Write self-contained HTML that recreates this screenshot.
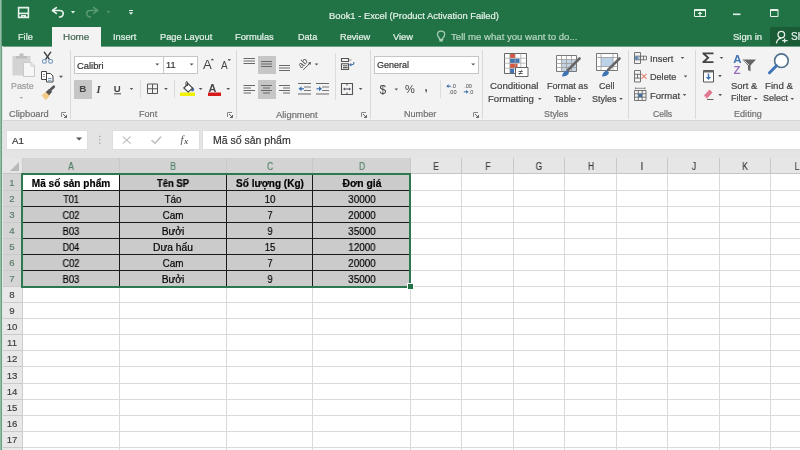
<!DOCTYPE html>
<html><head><meta charset="utf-8">
<style>
*{margin:0;padding:0;box-sizing:border-box}
html,body{width:800px;height:450px;overflow:hidden;background:#fff}
body{position:relative;font-family:"Liberation Sans",sans-serif}
.a{position:absolute}
.t{-webkit-text-stroke:0.2px currentColor;will-change:transform;position:absolute;white-space:nowrap;line-height:1;font-family:"Liberation Sans",sans-serif}
svg{position:absolute;overflow:visible;will-change:transform}
</style></head><body>

<div class="a" style="left:0px;top:0px;width:800px;height:46px;background:#217346;"></div>
<div class="t" style="left:329.00px;top:10.74px;font-size:9.4px;color:#e6f1ea;font-weight:normal;">Book1 - Excel (Product Activation Failed)</div>
<div class="a" style="left:52px;top:27px;width:49px;height:20px;background:#f3f3f3;"></div>
<div class="a" style="left:770px;top:27px;width:30px;height:19px;background:#195c36;"></div>
<div class="t" style="left:18.00px;top:33.21px;font-size:9.2px;color:#e6f1ea;font-weight:normal;">File</div>
<div class="t" style="left:62.80px;top:31.92px;font-size:9.9px;color:#40654f;font-weight:normal;">Home</div>
<div class="t" style="left:112.50px;top:33.13px;font-size:9.3px;color:#e6f1ea;font-weight:normal;">Insert</div>
<div class="t" style="left:160.00px;top:33.13px;font-size:9.3px;color:#e6f1ea;font-weight:normal;">Page Layout</div>
<div class="t" style="left:235.00px;top:33.13px;font-size:9.3px;color:#e6f1ea;font-weight:normal;">Formulas</div>
<div class="t" style="left:297.50px;top:33.30px;font-size:9.1px;color:#e6f1ea;font-weight:normal;">Data</div>
<div class="t" style="left:340.00px;top:33.21px;font-size:9.2px;color:#e6f1ea;font-weight:normal;">Review</div>
<div class="t" style="left:393.00px;top:33.13px;font-size:9.3px;color:#e6f1ea;font-weight:normal;">View</div>
<div class="t" style="left:451.00px;top:32.37px;font-size:9.6px;color:#b8d6c3;font-weight:normal;">Tell me what you want to do...</div>
<div class="t" style="left:733.00px;top:31.96px;font-size:9.5px;color:#e6f1ea;font-weight:normal;">Sign in</div>
<div class="t" style="left:791.30px;top:31.74px;font-size:10px;color:#e6f1ea;font-weight:normal;">Sh</div>
<div class="a" style="left:2px;top:46px;width:798px;height:75px;background:#f3f3f3;"></div>
<div class="a" style="left:2px;top:120px;width:798px;height:1px;background:#d6d6d6;"></div>
<div class="a" style="left:2px;top:46px;width:50px;height:1px;background:#6fa386;"></div>
<div class="a" style="left:101px;top:46px;width:699px;height:1px;background:#6fa386;"></div>
<div class="a" style="left:70px;top:50px;width:1px;height:69px;background:#d9d9d9;"></div>
<div class="a" style="left:236px;top:50px;width:1px;height:69px;background:#d9d9d9;"></div>
<div class="a" style="left:370px;top:50px;width:1px;height:69px;background:#d9d9d9;"></div>
<div class="a" style="left:482px;top:50px;width:1px;height:69px;background:#d9d9d9;"></div>
<div class="a" style="left:628px;top:50px;width:1px;height:69px;background:#d9d9d9;"></div>
<div class="a" style="left:695px;top:50px;width:1px;height:69px;background:#d9d9d9;"></div>
<div class="a" style="left:140px;top:80px;width:1px;height:18px;background:#dcdcdc;"></div>
<div class="a" style="left:174px;top:80px;width:1px;height:18px;background:#dcdcdc;"></div>
<div class="a" style="left:335px;top:53px;width:1px;height:47px;background:#dcdcdc;"></div>
<div class="a" style="left:440px;top:80px;width:1px;height:18px;background:#dcdcdc;"></div>
<div class="a" style="left:74px;top:55.5px;width:90px;height:18px;background:#fff;border:1px solid #c6c6c6"></div>
<div class="a" style="left:163px;top:55.5px;width:35px;height:18px;background:#fff;border:1px solid #c6c6c6"></div>
<div class="a" style="left:374px;top:55.5px;width:105px;height:18px;background:#fff;border:1px solid #c6c6c6"></div>
<div class="a" style="left:74px;top:80px;width:18px;height:19px;background:#c6c6c6;"></div>
<div class="a" style="left:258px;top:55.5px;width:18px;height:18px;background:#c6c6c6;"></div>
<div class="a" style="left:258px;top:80px;width:18px;height:19px;background:#c6c6c6;"></div>
<div class="t" style="left:9.00px;top:109.63px;font-size:9.3px;color:#707070;font-weight:normal;">Clipboard</div>
<div class="t" style="left:138.50px;top:109.80px;font-size:9.1px;color:#707070;font-weight:normal;">Font</div>
<div class="t" style="left:276.00px;top:109.54px;font-size:9.4px;color:#707070;font-weight:normal;">Alignment</div>
<div class="t" style="left:403.60px;top:109.80px;font-size:9.1px;color:#707070;font-weight:normal;">Number</div>
<div class="t" style="left:543.60px;top:109.97px;font-size:8.9px;color:#707070;font-weight:normal;">Styles</div>
<div class="t" style="left:652.50px;top:110.22px;font-size:8.6px;color:#707070;font-weight:normal;">Cells</div>
<div class="t" style="left:734.00px;top:109.80px;font-size:9.1px;color:#707070;font-weight:normal;">Editing</div>
<div class="t" style="left:11.00px;top:81.97px;font-size:8.9px;color:#9b9b9b;font-weight:normal;">Paste</div>
<div class="t" style="left:76.50px;top:60.84px;font-size:9.4px;color:#333;font-weight:normal;">Calibri</div>
<div class="t" style="left:166.00px;top:61.01px;font-size:9.2px;color:#333;font-weight:normal;">11</div>
<div class="t" style="left:377.00px;top:61.18px;font-size:9.0px;color:#333;font-weight:normal;">General</div>
<div class="t" style="left:490.40px;top:81.29px;font-size:9.7px;color:#444;font-weight:normal;">Conditional</div>
<div class="t" style="left:488.40px;top:94.37px;font-size:9.6px;color:#444;font-weight:normal;">Formatting</div>
<div class="t" style="left:546.50px;top:81.80px;font-size:9.1px;color:#444;font-weight:normal;">Format as</div>
<div class="t" style="left:553.60px;top:94.71px;font-size:9.2px;color:#444;font-weight:normal;">Table</div>
<div class="t" style="left:599.00px;top:81.88px;font-size:9.0px;color:#444;font-weight:normal;">Cell</div>
<div class="t" style="left:591.60px;top:94.88px;font-size:9.0px;color:#444;font-weight:normal;">Styles</div>
<div class="t" style="left:649.50px;top:54.63px;font-size:9.3px;color:#444;font-weight:normal;">Insert</div>
<div class="t" style="left:649.50px;top:72.80px;font-size:9.1px;color:#444;font-weight:normal;">Delete</div>
<div class="t" style="left:649.50px;top:90.96px;font-size:9.5px;color:#444;font-weight:normal;">Format</div>
<div class="t" style="left:731.00px;top:81.26px;font-size:9.5px;color:#444;font-weight:normal;">Sort &amp;</div>
<div class="t" style="left:731.00px;top:94.30px;font-size:9.1px;color:#444;font-weight:normal;">Filter</div>
<div class="t" style="left:764.50px;top:81.09px;font-size:9.7px;color:#444;font-weight:normal;">Find &amp;</div>
<div class="t" style="left:763.20px;top:94.38px;font-size:9.0px;color:#444;font-weight:normal;">Select</div>
<svg style="left:0;top:0" width="800" height="450" viewBox="0 0 800 450"><g fill="none" stroke="#e6f1ea" stroke-width="1.6"><path d="M18.6 7.6H28.4V17.4H18.6Z"/><path d="M19 13.4H28"/></g><path d="M21 15H26V17.5H24V16.2H22.6V17.5H21Z" fill="#e6f1ea"/><g fill="none" stroke="#e6f1ea" stroke-width="1.7" stroke-linecap="round" stroke-linejoin="round"><path d="M56.3 7.6L52.5 10.5L56.3 13.4"/><path d="M52.8 10.5H59.5C62 10.5 63.2 12 63.2 13.7C63.2 15.5 61.6 17 59.5 17"/></g><path d="M70.9 11.0 L75.1 11.0 L73 13.399999999999999 Z" fill="#e6f1ea"/><g fill="none" stroke="#5a9a74" stroke-width="1.5" stroke-linecap="round" stroke-linejoin="round"><path d="M93.5 7.4L97.7 10.4L93.5 13.5"/><path d="M97.5 10.4H90.5C88 10.4 86.7 12 86.7 13.6C86.7 15.4 88.4 17 90.5 17"/></g><path d="M106.7 11.1 L110.3 11.1 L108.5 13.299999999999999 Z" fill="#5a9a74"/><path d="M129 10.5H133" stroke="#e6f1ea" stroke-width="1"/><path d="M128.8 12.2 L133.2 12.2 L131 14.8 Z" fill="#e6f1ea"/><g fill="none" stroke="#e6f1ea" stroke-width="1"><path d="M694.5 9.5H705.5V16.5H694.5Z"/></g><path d="M694.5 9.5H705.5V11H694.5Z" fill="#e6f1ea"/><path d="M697.5 14L700 11.5L702.5 14Z" fill="#e6f1ea"/><path d="M700 13V16" stroke="#e6f1ea" stroke-width="1.2"/><path d="M733 14.3H740.5" stroke="#e6f1ea" stroke-width="1.6"/><path d="M770.5 9.5H778V16.5H770.5Z" fill="none" stroke="#e6f1ea" stroke-width="1"/><path d="M770.5 9.5H778V11H770.5Z" fill="#e6f1ea"/><g fill="none" stroke="#a9cfb7" stroke-width="1.2"><path d="M439.5 38.2C438.2 36.9 437.5 35.8 437.5 34.4C437.5 32.4 439.1 31.2 441.1 31.2C443.1 31.2 444.7 32.4 444.7 34.4C444.7 35.8 444 36.9 442.7 38.2V39.3H439.5Z"/></g><path d="M439.4 39.8H442.8V41.6H439.4Z" fill="#a9cfb7"/><g fill="none" stroke="#e6f1ea" stroke-width="1.3"><circle cx="781.3" cy="34.6" r="3.3"/><path d="M776.4 43.4C776.8 40.4 778.6 38.3 781.3 38.3"/><path d="M784.6 38.6V42.8M782.2 40.6H787.6"/></g><path d="M12.5 56H30.5V75.5H12.5Z" fill="#d3d3d3"/><path d="M16 58.5V56H19.5V53.5H23.5V56H27V58.5Z" fill="#bdbdbd"/><path d="M23.5 62.5H31L34.5 66V76.5H23.5Z" fill="#f7f7f7" stroke="#c9c9c9" stroke-width="1"/><path d="M31 62.5V66H34.5" fill="none" stroke="#c9c9c9" stroke-width="1"/><path d="M19.5 97.0 L22.9 97.0 L21.2 99.0 Z" fill="#a8a8a8"/><g stroke="#3b3b3b" stroke-width="1.4" fill="none" stroke-linecap="round"><path d="M44.3 52.2L49.2 59.2"/><path d="M50.7 52.2L45.8 59.2"/></g><g stroke="#6b8fb8" stroke-width="1.1" fill="#fff"><circle cx="44.4" cy="61.4" r="1.9"/><circle cx="50.6" cy="61.4" r="1.9"/></g><g stroke="#444" stroke-width="1" fill="#fff"><path d="M41.5 71.5H46.5V79.5H41.5Z"/><path d="M46.5 73.5H50.5L53 76V82H46.5Z"/></g><path d="M48 78.5H51.5M48 80.3H51.5" stroke="#5b84b1" stroke-width="0.8"/><path d="M43 74.5H45M43 76.5H45" stroke="#888" stroke-width="0.8"/><path d="M59.0 75.7 L63.0 75.7 L61 77.89999999999999 Z" fill="#555"/><path d="M41.5 95.5L46.5 91.2L50.2 95L46 100.2Z" fill="#f3cc8c"/><path d="M46.2 91.5L51.5 86.8L54.3 89.8L49.8 95Z" fill="none"/><path d="M45.8 92L49.3 88.8L52.2 91.8L49 95.2Z" fill="#555"/><path d="M50.8 89.5L53.8 86.7" stroke="#555" stroke-width="2.6" stroke-linecap="round"/><path d="M61.5 117V112.5H66" fill="none" stroke="#888" stroke-width="1"/><path d="M63 114L66.5 117.5M66.5 115V117.5H64" fill="none" stroke="#666" stroke-width="1"/><path d="M155.3 63.4 L159.3 63.4 L157.3 65.6 Z" fill="#555"/><path d="M189.6 63.4 L193.6 63.4 L191.6 65.6 Z" fill="#555"/><path d="M471.2 63.4 L475.2 63.4 L473.2 65.6 Z" fill="#555"/><text x="203" y="69.3" font-family="Liberation Sans" font-size="13.2" fill="#444">A</text><path d="M210.5 60.2L212.3 58.5L214.1 60.2Z" fill="#444"/><text x="221" y="69.3" font-family="Liberation Sans" font-size="10" fill="#444">A</text><path d="M227.5 59.3L229.3 61L231.1 59.3Z" fill="#444"/><text x="79.3" y="92.4" font-family="Liberation Sans" font-weight="bold" font-size="9.8" fill="#444">B</text><text x="96.5" y="92.5" font-family="Liberation Serif" font-style="italic" font-weight="bold" font-size="10.5" fill="#444">I</text><text x="113.8" y="91.8" font-family="Liberation Sans" font-weight="bold" font-size="9.6" fill="#444">U</text><path d="M114 93.8H121" stroke="#444" stroke-width="1"/><path d="M129.7 87.9 L133.3 87.9 L131.5 90.1 Z" fill="#555"/><g fill="none" stroke="#555" stroke-width="1"><path d="M147.5 84H157.5V93.5H147.5Z"/><path d="M152.5 84V93.5M147.5 88.75H157.5"/></g><path d="M164.1 87.9 L167.9 87.9 L166 90.1 Z" fill="#555"/><path d="M180 92.5H195V96H180Z" fill="#f2f200"/><path d="M191 86.5C193 86.8 194.3 88.2 194.2 90C193.8 91.3 192.5 91.5 191.3 91Z" fill="#4d6ea3"/><path d="M183.8 88L188.3 83.8L192.6 88.2L188.2 92Z" fill="#fff" stroke="#444" stroke-width="1.1"/><path d="M186 85.8V82.2C186 81.4 187.5 81.4 187.5 82.2V86" fill="none" stroke="#444" stroke-width="1"/><path d="M198.7 87.9 L202.5 87.9 L200.6 90.1 Z" fill="#555"/><path d="M208 92.5H221V96H208Z" fill="#d61a1a"/><text x="208.6" y="91.6" font-family="Liberation Sans" font-weight="bold" font-size="10.8" fill="#454545">A</text><path d="M226.29999999999998 87.9 L230.1 87.9 L228.2 90.1 Z" fill="#555"/><path d="M227.5 117V112.5H232" fill="none" stroke="#888" stroke-width="1"/><path d="M229 114L232.5 117.5M232.5 115V117.5H230" fill="none" stroke="#666" stroke-width="1"/><path d="M243.5 58.5H255" stroke="#686868" stroke-width="1"/><path d="M243.5 61H255" stroke="#686868" stroke-width="1"/><path d="M243.5 63.5H255" stroke="#686868" stroke-width="1"/><path d="M261 61.5H272" stroke="#686868" stroke-width="1"/><path d="M261 64H272" stroke="#686868" stroke-width="1"/><path d="M261 66.5H272" stroke="#686868" stroke-width="1"/><path d="M279 65.5H290" stroke="#686868" stroke-width="1"/><path d="M279 68H290" stroke="#686868" stroke-width="1"/><path d="M279 70.5H290" stroke="#686868" stroke-width="1"/><path d="M243.5 85.5H255" stroke="#686868" stroke-width="1"/><path d="M243.5 88H251" stroke="#686868" stroke-width="1"/><path d="M243.5 90.5H255" stroke="#686868" stroke-width="1"/><path d="M243.5 93H251" stroke="#686868" stroke-width="1"/><path d="M261 85.5H272" stroke="#686868" stroke-width="1"/><path d="M263 88H270" stroke="#686868" stroke-width="1"/><path d="M261 90.5H272" stroke="#686868" stroke-width="1"/><path d="M263 93H270" stroke="#686868" stroke-width="1"/><path d="M279 85.5H290" stroke="#686868" stroke-width="1"/><path d="M283 88H290" stroke="#686868" stroke-width="1"/><path d="M279 90.5H290" stroke="#686868" stroke-width="1"/><path d="M283 93H290" stroke="#686868" stroke-width="1"/><text x="297.6" y="66.3" transform="rotate(-45 302.3 63)" font-family="Liberation Sans" font-size="9" fill="#4a4a4a">ab</text><path d="M303.3 69.8L309.5 63.6" stroke="#555" stroke-width="1"/><path d="M311 62L310.3 65L308 62.7Z" fill="#444"/><path d="M314.7 63.4 L318.3 63.4 L316.5 65.6 Z" fill="#555"/><path d="M298 83.5H311" stroke="#686868" stroke-width="1"/><path d="M298 94H311" stroke="#686868" stroke-width="1"/><path d="M304 87H311" stroke="#777" stroke-width="1"/><path d="M304 90.5H311" stroke="#777" stroke-width="1"/><path d="M298.5 88.8L301.5 86.3V91.3Z" fill="#3d6fae"/><path d="M300.5 88.8H304" stroke="#3d6fae" stroke-width="1.2"/><path d="M316 83.5H329" stroke="#686868" stroke-width="1"/><path d="M316 94H329" stroke="#686868" stroke-width="1"/><path d="M322 87H329" stroke="#777" stroke-width="1"/><path d="M322 90.5H329" stroke="#777" stroke-width="1"/><path d="M322 88.8L319 86.3V91.3Z" fill="#3d6fae"/><path d="M316.5 88.8H320" stroke="#3d6fae" stroke-width="1.2"/><g fill="none" stroke="#555" stroke-width="1.1"><path d="M341.5 58.5H348.5V61.5H341.5Z"/><path d="M341.5 63.8H348.5V69.5H341.5Z"/><path d="M343 65.8H347.5M343 67.6H347.5"/></g><path d="M349 60H351.5" stroke="#888" stroke-width="1"/><path d="M353.8 62V63.2C353.8 64.2 353 64.8 351.8 64.8H350.5" fill="none" stroke="#3d6fae" stroke-width="1.1"/><path d="M349 64.8L351.3 63V66.6Z" fill="#3d6fae"/><g fill="none" stroke="#555" stroke-width="1.1"><path d="M341.5 83.5H352.5V94.5H341.5Z"/><path d="M347 83.5V85.5M347 92.5V94.5"/></g><path d="M344.5 89H349.5" stroke="#667" stroke-width="1.2"/><path d="M343 89L345 87.5V90.5Z" fill="#556"/><path d="M351 89L349 87.5V90.5Z" fill="#556"/><path d="M358.8 87.9 L362.40000000000003 87.9 L360.6 90.1 Z" fill="#555"/><path d="M361.5 117V112.5H366" fill="none" stroke="#888" stroke-width="1"/><path d="M363 114L366.5 117.5M366.5 115V117.5H364" fill="none" stroke="#666" stroke-width="1"/><text x="379.5" y="93.5" font-family="Liberation Sans" font-size="12" fill="#444">$</text><path d="M394.5 88.4 L398.1 88.4 L396.3 90.6 Z" fill="#555"/><text x="405" y="93.3" font-family="Liberation Sans" font-size="11" fill="#444">%</text><text x="424.5" y="91" font-family="Liberation Sans" font-weight="bold" font-size="11" fill="#444">,</text><g font-family="Liberation Sans" font-size="5.6" fill="#444"><text x="451.2" y="88.4">.0</text><text x="448.8" y="94.4">.00</text><text x="464.2" y="88.4">.00</text><text x="468.6" y="94.4">.0</text></g><path d="M446.2 86.2L448.6 84.3V88.1Z" fill="#3d6fae"/><path d="M448 86.2H451" stroke="#3d6fae" stroke-width="1"/><path d="M468.6 91.8L466.2 89.9V93.7Z" fill="#3d6fae"/><path d="M463.8 91.8H467" stroke="#3d6fae" stroke-width="1"/><path d="M473.5 117V112.5H478" fill="none" stroke="#888" stroke-width="1"/><path d="M475 114L478.5 117.5M478.5 115V117.5H476" fill="none" stroke="#666" stroke-width="1"/><path d="M504.5 53.5H526.5V73.5H504.5Z" fill="#fff" stroke="#666" stroke-width="1"/><path d="M510 54H515V58H510Z" fill="#d8553e"/><path d="M510 58.5H519.5V63H510Z" fill="#3f74b5"/><path d="M510 63.5H517.5V68H510Z" fill="#d8553e"/><path d="M510 68.5H514V73H510Z" fill="#3f74b5"/><g stroke="#aaa" stroke-width="0.8"><path d="M504.5 58.2H526.5M504.5 63.2H526.5M504.5 68.2H526.5M509.8 53.5V73.5M515.2 53.5V73.5M520.8 53.5V73.5"/></g><path d="M515.5 67.5H528V76.5H515.5Z" fill="#fff" stroke="#666" stroke-width="1"/><text x="518.6" y="75.2" font-family="Liberation Sans" font-size="8.5" fill="#333">≠</text><path d="M538.0 97.9 L541.5999999999999 97.9 L539.8 100.1 Z" fill="#555"/><path d="M556.5 55.5H576.5V71.5H556.5Z" fill="#fff" stroke="#777" stroke-width="1"/><path d="M561.5 59.5H576V71H561.5Z" fill="#c3d3e2"/><g stroke="#999" stroke-width="0.8"><path d="M556.5 59.5H576.5M556.5 63.5H576.5M556.5 67.5H576.5M561.5 55.5V71.5M566.5 55.5V71.5M571.5 55.5V71.5"/></g><path d="M568 70L579.5 58.5" stroke="#666" stroke-width="2.6" stroke-linecap="round"/><path d="M562 76.5C562.5 73 564 71 567 70.5L569 72.5C568.5 75 566 76.5 562 76.5Z" fill="#3f74b5"/><path d="M577.7 97.9 L581.3 97.9 L579.5 100.1 Z" fill="#555"/><path d="M596.5 53.5H617.5V70.5H596.5Z" fill="#fff" stroke="#777" stroke-width="1"/><path d="M601 57.5H613V66.5H601Z" fill="#bcd2e8"/><g stroke="#999" stroke-width="0.8"><path d="M596.5 57.5H617.5M596.5 66.5H617.5M601 53.5V70.5M613 53.5V70.5"/></g><path d="M608 70L619.5 58.5" stroke="#666" stroke-width="2.6" stroke-linecap="round"/><path d="M602 76.5C602.5 73 604 71 607 70.5L609 72.5C608.5 75 606 76.5 602 76.5Z" fill="#3f74b5"/><path d="M619.2 97.9 L622.8 97.9 L621 100.1 Z" fill="#555"/><g fill="none" stroke="#666" stroke-width="0.9"><path d="M634.5 52.5H640.5V63.5H634.5Z"/><path d="M634.5 56.2H640.5M634.5 59.8H640.5"/><path d="M640.5 56.2H646.5V59.8H640.5Z"/><path d="M643.5 56.2V59.8"/></g><path d="M634.3 58L637.3 55.8V60.2Z" fill="#4f7fb8"/><path d="M636 58H639.5" stroke="#4f7fb8" stroke-width="1.2"/><path d="M680.7 56.9 L684.3 56.9 L682.5 59.1 Z" fill="#555"/><g fill="none" stroke="#666" stroke-width="0.9"><path d="M634.5 70.5H640.5V82H634.5Z"/><path d="M634.5 74.3H640.5M634.5 78.1H640.5M637.5 74.3V78.1"/></g><path d="M641.5 73.8L646.5 78.8M646.5 73.8L641.5 78.8" stroke="#e57f72" stroke-width="1.1"/><path d="M683.7 75.4 L687.3 75.4 L685.5 77.6 Z" fill="#555"/><g fill="none" stroke="#666" stroke-width="0.9"><path d="M634.5 90.5H646V100.5H634.5Z"/><path d="M634.5 93.8H646M634.5 97.2H646M638.3 90.5V100.5M642.2 90.5V100.5"/></g><path d="M635.5 88.3H645M635.5 87.3V89.3M645 87.3V89.3" stroke="#777" stroke-width="0.8"/><path d="M638.5 94H642V97H638.5Z" fill="#3f6fa8"/><path d="M682.7 93.9 L686.3 93.9 L684.5 96.1 Z" fill="#555"/><path d="M702.5 52.5H713.5V54.3H705.8L709.5 57.7L705.8 61.2H713.5V63H702.5V61.5L706.8 57.7L702.5 54Z" fill="#444"/><path d="M719.7 56.9 L723.3 56.9 L721.5 59.1 Z" fill="#555"/><path d="M703.5 70.5H713.5V82H703.5Z" fill="#fff" stroke="#555" stroke-width="1"/><path d="M703.5 70.5H713.5V72.5H703.5Z" fill="#666"/><path d="M708.5 73.5V79" stroke="#3f74b5" stroke-width="1.5"/><path d="M705.8 77L708.5 80L711.2 77Z" fill="#3f74b5"/><path d="M718.2 75.10000000000001 L721.8 75.10000000000001 L720 77.3 Z" fill="#555"/><path d="M704 95.5L709.5 89.5L712.5 92.5L707 98.5Z" fill="#e0778f"/><path d="M704 95.5L707 98.5" stroke="#f0b0c0" stroke-width="1"/><path d="M707 99.5H713.5" stroke="#555" stroke-width="0.9"/><path d="M718.4000000000001 94.10000000000001 L722.0 94.10000000000001 L720.2 96.3 Z" fill="#555"/><text x="733.2" y="63.3" font-family="Liberation Sans" font-size="11.5" font-weight="bold" fill="#3f74b5">A</text><text x="733.4" y="74" font-family="Liberation Sans" font-size="11.5" font-weight="bold" fill="#9a6fc0">Z</text><path d="M742.5 59.5H756L750.5 65.5V71.5L748 70V65.5Z" fill="#666"/><path d="M744.5 60.5L749 65" stroke="#e8e8e8" stroke-width="0.8"/><path d="M754.0 97.9 L757.5999999999999 97.9 L755.8 100.1 Z" fill="#555"/><circle cx="781.4" cy="60.7" r="6.8" fill="#fff" stroke="#4f6f8c" stroke-width="1.6"/><path d="M776.5 65.8L769.5 72.8" stroke="#3f74b5" stroke-width="3" stroke-linecap="round"/><path d="M790.5 97.9 L794.0999999999999 97.9 L792.3 100.1 Z" fill="#555"/></svg>
<div class="a" style="left:2px;top:121px;width:798px;height:38px;background:#e4e4e4;"></div>
<div class="a" style="left:6px;top:129.5px;width:82px;height:20.5px;background:#fff;border:1px solid #dedede"></div>
<div class="t" style="left:11.50px;top:135.99px;font-size:9.7px;color:#333;font-weight:normal;">A1</div>
<div class="a" style="left:111.5px;top:129.5px;width:88px;height:20.5px;background:#fff;border:1px solid #dedede"></div>
<div class="a" style="left:202px;top:129.5px;width:600px;height:20.5px;background:#fff;border:1px solid #dedede"></div>
<div class="t" style="left:213.00px;top:135.11px;font-size:10.5px;color:#333;font-weight:normal;">Mã số sản phẩm</div>
<svg style="left:0;top:0" width="800" height="450" viewBox="0 0 800 450"><path d="M76 137.6H82.2L79.1 140.6Z" fill="#555"/><g fill="#9a9a9a"><rect x="99.2" y="135.8" width="1.2" height="1.2"/><rect x="99.2" y="139.2" width="1.2" height="1.2"/><rect x="99.2" y="142.6" width="1.2" height="1.2"/></g><path d="M122.8 136.6L130.6 143.6M130.6 136.6L122.8 143.6" stroke="#bdbdbd" stroke-width="1.1"/><path d="M151.5 140.2L155 143.4L161 136.6" fill="none" stroke="#c4c4c4" stroke-width="1.6"/><text x="180.5" y="143" font-family="Liberation Serif" font-style="italic" font-size="11" fill="#555">f</text><text x="184.3" y="144" font-family="Liberation Serif" font-style="italic" font-weight="bold" font-size="8" fill="#555">x</text></svg>
<div class="a" style="left:2px;top:158px;width:798px;height:16px;background:#e6e6e6;"></div>
<div class="a" style="left:22px;top:158px;width:389px;height:15px;background:#d3d3d3;"></div>
<div class="a" style="left:2px;top:174px;width:21px;height:276px;background:#e8e8e8;"></div>
<div class="a" style="left:2px;top:174px;width:21px;height:113px;background:#d5d5d5;"></div>
<div class="a" style="left:119px;top:174px;width:1px;height:276px;background:#dadada;"></div>
<div class="a" style="left:119px;top:158px;width:1px;height:15px;background:#c8c8c8;"></div>
<div class="a" style="left:226px;top:174px;width:1px;height:276px;background:#dadada;"></div>
<div class="a" style="left:226px;top:158px;width:1px;height:15px;background:#c8c8c8;"></div>
<div class="a" style="left:312px;top:174px;width:1px;height:276px;background:#dadada;"></div>
<div class="a" style="left:312px;top:158px;width:1px;height:15px;background:#c8c8c8;"></div>
<div class="a" style="left:410px;top:174px;width:1px;height:276px;background:#dadada;"></div>
<div class="a" style="left:410px;top:158px;width:1px;height:15px;background:#c8c8c8;"></div>
<div class="a" style="left:461px;top:174px;width:1px;height:276px;background:#dadada;"></div>
<div class="a" style="left:461px;top:158px;width:1px;height:15px;background:#c8c8c8;"></div>
<div class="a" style="left:513px;top:174px;width:1px;height:276px;background:#dadada;"></div>
<div class="a" style="left:513px;top:158px;width:1px;height:15px;background:#c8c8c8;"></div>
<div class="a" style="left:564px;top:174px;width:1px;height:276px;background:#dadada;"></div>
<div class="a" style="left:564px;top:158px;width:1px;height:15px;background:#c8c8c8;"></div>
<div class="a" style="left:616px;top:174px;width:1px;height:276px;background:#dadada;"></div>
<div class="a" style="left:616px;top:158px;width:1px;height:15px;background:#c8c8c8;"></div>
<div class="a" style="left:667px;top:174px;width:1px;height:276px;background:#dadada;"></div>
<div class="a" style="left:667px;top:158px;width:1px;height:15px;background:#c8c8c8;"></div>
<div class="a" style="left:719px;top:174px;width:1px;height:276px;background:#dadada;"></div>
<div class="a" style="left:719px;top:158px;width:1px;height:15px;background:#c8c8c8;"></div>
<div class="a" style="left:770px;top:174px;width:1px;height:276px;background:#dadada;"></div>
<div class="a" style="left:770px;top:158px;width:1px;height:15px;background:#c8c8c8;"></div>
<div class="a" style="left:22px;top:190px;width:778px;height:1px;background:#dadada;"></div>
<div class="a" style="left:2px;top:190px;width:21px;height:1px;background:#cacaca;"></div>
<div class="a" style="left:22px;top:206px;width:778px;height:1px;background:#dadada;"></div>
<div class="a" style="left:2px;top:206px;width:21px;height:1px;background:#cacaca;"></div>
<div class="a" style="left:22px;top:222px;width:778px;height:1px;background:#dadada;"></div>
<div class="a" style="left:2px;top:222px;width:21px;height:1px;background:#cacaca;"></div>
<div class="a" style="left:22px;top:238px;width:778px;height:1px;background:#dadada;"></div>
<div class="a" style="left:2px;top:238px;width:21px;height:1px;background:#cacaca;"></div>
<div class="a" style="left:22px;top:254px;width:778px;height:1px;background:#dadada;"></div>
<div class="a" style="left:2px;top:254px;width:21px;height:1px;background:#cacaca;"></div>
<div class="a" style="left:22px;top:270px;width:778px;height:1px;background:#dadada;"></div>
<div class="a" style="left:2px;top:270px;width:21px;height:1px;background:#cacaca;"></div>
<div class="a" style="left:22px;top:286px;width:778px;height:1px;background:#dadada;"></div>
<div class="a" style="left:2px;top:286px;width:21px;height:1px;background:#cacaca;"></div>
<div class="a" style="left:22px;top:302px;width:778px;height:1px;background:#dadada;"></div>
<div class="a" style="left:2px;top:302px;width:21px;height:1px;background:#cacaca;"></div>
<div class="a" style="left:22px;top:318px;width:778px;height:1px;background:#dadada;"></div>
<div class="a" style="left:2px;top:318px;width:21px;height:1px;background:#cacaca;"></div>
<div class="a" style="left:22px;top:334px;width:778px;height:1px;background:#dadada;"></div>
<div class="a" style="left:2px;top:334px;width:21px;height:1px;background:#cacaca;"></div>
<div class="a" style="left:22px;top:350px;width:778px;height:1px;background:#dadada;"></div>
<div class="a" style="left:2px;top:350px;width:21px;height:1px;background:#cacaca;"></div>
<div class="a" style="left:22px;top:366px;width:778px;height:1px;background:#dadada;"></div>
<div class="a" style="left:2px;top:366px;width:21px;height:1px;background:#cacaca;"></div>
<div class="a" style="left:22px;top:383px;width:778px;height:1px;background:#dadada;"></div>
<div class="a" style="left:2px;top:383px;width:21px;height:1px;background:#cacaca;"></div>
<div class="a" style="left:22px;top:399px;width:778px;height:1px;background:#dadada;"></div>
<div class="a" style="left:2px;top:399px;width:21px;height:1px;background:#cacaca;"></div>
<div class="a" style="left:22px;top:415px;width:778px;height:1px;background:#dadada;"></div>
<div class="a" style="left:2px;top:415px;width:21px;height:1px;background:#cacaca;"></div>
<div class="a" style="left:22px;top:431px;width:778px;height:1px;background:#dadada;"></div>
<div class="a" style="left:2px;top:431px;width:21px;height:1px;background:#cacaca;"></div>
<div class="a" style="left:22px;top:447px;width:778px;height:1px;background:#dadada;"></div>
<div class="a" style="left:2px;top:447px;width:21px;height:1px;background:#cacaca;"></div>
<div class="a" style="left:22px;top:463px;width:778px;height:1px;background:#dadada;"></div>
<div class="a" style="left:2px;top:463px;width:21px;height:1px;background:#cacaca;"></div>
<div class="a" style="left:2px;top:173px;width:798px;height:1px;background:#c6c6c6;"></div>
<div class="a" style="left:22px;top:158px;width:1px;height:292px;background:#cdcdcd;"></div>
<svg style="left:10px;top:162px" width="10" height="10" viewBox="0 0 10 10"><path d="M9 0 L9 9 L0 9 Z" fill="#b9b9b9"/></svg>
<div class="t" style="left:-29.50px;width:200px;text-align:center;top:161.84px;font-size:10.0px;color:#4a7d60;font-weight:normal;transform:scaleX(0.82);">A</div>
<div class="t" style="left:73.00px;width:200px;text-align:center;top:161.84px;font-size:10.0px;color:#4a7d60;font-weight:normal;transform:scaleX(0.82);">B</div>
<div class="t" style="left:169.50px;width:200px;text-align:center;top:161.84px;font-size:10.0px;color:#4a7d60;font-weight:normal;transform:scaleX(0.82);">C</div>
<div class="t" style="left:261.50px;width:200px;text-align:center;top:161.84px;font-size:10.0px;color:#4a7d60;font-weight:normal;transform:scaleX(0.82);">D</div>
<div class="t" style="left:336.00px;width:200px;text-align:center;top:161.84px;font-size:10.0px;color:#333;font-weight:normal;transform:scaleX(0.82);">E</div>
<div class="t" style="left:387.50px;width:200px;text-align:center;top:161.84px;font-size:10.0px;color:#333;font-weight:normal;transform:scaleX(0.82);">F</div>
<div class="t" style="left:439.00px;width:200px;text-align:center;top:161.84px;font-size:10.0px;color:#333;font-weight:normal;transform:scaleX(0.82);">G</div>
<div class="t" style="left:490.50px;width:200px;text-align:center;top:161.84px;font-size:10.0px;color:#333;font-weight:normal;transform:scaleX(0.82);">H</div>
<div class="t" style="left:542.00px;width:200px;text-align:center;top:161.84px;font-size:10.0px;color:#333;font-weight:normal;transform:scaleX(0.82);">I</div>
<div class="t" style="left:593.50px;width:200px;text-align:center;top:161.84px;font-size:10.0px;color:#333;font-weight:normal;transform:scaleX(0.82);">J</div>
<div class="t" style="left:645.00px;width:200px;text-align:center;top:161.84px;font-size:10.0px;color:#333;font-weight:normal;transform:scaleX(0.82);">K</div>
<div class="t" style="left:696.50px;width:200px;text-align:center;top:161.84px;font-size:10.0px;color:#333;font-weight:normal;transform:scaleX(0.82);">L</div>
<div class="t" style="left:-87.70px;width:200px;text-align:center;top:178.27px;font-size:9.6px;color:#587a66;font-weight:normal;-webkit-text-stroke:0.15px #587a66;">1</div>
<div class="t" style="left:-87.70px;width:200px;text-align:center;top:194.27px;font-size:9.6px;color:#587a66;font-weight:normal;-webkit-text-stroke:0.15px #587a66;">2</div>
<div class="t" style="left:-87.70px;width:200px;text-align:center;top:210.27px;font-size:9.6px;color:#587a66;font-weight:normal;-webkit-text-stroke:0.15px #587a66;">3</div>
<div class="t" style="left:-87.70px;width:200px;text-align:center;top:226.27px;font-size:9.6px;color:#587a66;font-weight:normal;-webkit-text-stroke:0.15px #587a66;">4</div>
<div class="t" style="left:-87.70px;width:200px;text-align:center;top:242.27px;font-size:9.6px;color:#587a66;font-weight:normal;-webkit-text-stroke:0.15px #587a66;">5</div>
<div class="t" style="left:-87.70px;width:200px;text-align:center;top:258.27px;font-size:9.6px;color:#587a66;font-weight:normal;-webkit-text-stroke:0.15px #587a66;">6</div>
<div class="t" style="left:-87.70px;width:200px;text-align:center;top:274.27px;font-size:9.6px;color:#587a66;font-weight:normal;-webkit-text-stroke:0.15px #587a66;">7</div>
<div class="t" style="left:-87.70px;width:200px;text-align:center;top:290.27px;font-size:9.6px;color:#3a3a3a;font-weight:normal;-webkit-text-stroke:0.15px #3a3a3a;">8</div>
<div class="t" style="left:-87.70px;width:200px;text-align:center;top:306.27px;font-size:9.6px;color:#3a3a3a;font-weight:normal;-webkit-text-stroke:0.15px #3a3a3a;">9</div>
<div class="t" style="left:-87.70px;width:200px;text-align:center;top:322.27px;font-size:9.6px;color:#3a3a3a;font-weight:normal;-webkit-text-stroke:0.15px #3a3a3a;">10</div>
<div class="t" style="left:-87.70px;width:200px;text-align:center;top:338.27px;font-size:9.6px;color:#3a3a3a;font-weight:normal;-webkit-text-stroke:0.15px #3a3a3a;">11</div>
<div class="t" style="left:-87.70px;width:200px;text-align:center;top:354.27px;font-size:9.6px;color:#3a3a3a;font-weight:normal;-webkit-text-stroke:0.15px #3a3a3a;">12</div>
<div class="t" style="left:-87.70px;width:200px;text-align:center;top:371.27px;font-size:9.6px;color:#3a3a3a;font-weight:normal;-webkit-text-stroke:0.15px #3a3a3a;">13</div>
<div class="t" style="left:-87.70px;width:200px;text-align:center;top:387.27px;font-size:9.6px;color:#3a3a3a;font-weight:normal;-webkit-text-stroke:0.15px #3a3a3a;">14</div>
<div class="t" style="left:-87.70px;width:200px;text-align:center;top:403.27px;font-size:9.6px;color:#3a3a3a;font-weight:normal;-webkit-text-stroke:0.15px #3a3a3a;">15</div>
<div class="t" style="left:-87.70px;width:200px;text-align:center;top:419.27px;font-size:9.6px;color:#3a3a3a;font-weight:normal;-webkit-text-stroke:0.15px #3a3a3a;">16</div>
<div class="t" style="left:-87.70px;width:200px;text-align:center;top:435.27px;font-size:9.6px;color:#3a3a3a;font-weight:normal;-webkit-text-stroke:0.15px #3a3a3a;">17</div>
<div class="a" style="left:22px;top:174px;width:389px;height:112px;background:#cbcbcb;"></div>
<div class="a" style="left:22px;top:174px;width:97px;height:16px;background:#ffffff;"></div>
<div class="a" style="left:22px;top:190px;width:389px;height:1px;background:#1a1a1a;"></div>
<div class="a" style="left:22px;top:206px;width:389px;height:1px;background:#1a1a1a;"></div>
<div class="a" style="left:22px;top:222px;width:389px;height:1px;background:#1a1a1a;"></div>
<div class="a" style="left:22px;top:238px;width:389px;height:1px;background:#1a1a1a;"></div>
<div class="a" style="left:22px;top:254px;width:389px;height:1px;background:#1a1a1a;"></div>
<div class="a" style="left:22px;top:270px;width:389px;height:1px;background:#1a1a1a;"></div>
<div class="a" style="left:119px;top:174px;width:1px;height:112px;background:#1a1a1a;"></div>
<div class="a" style="left:226px;top:174px;width:1px;height:112px;background:#1a1a1a;"></div>
<div class="a" style="left:312px;top:174px;width:1px;height:112px;background:#1a1a1a;"></div>
<div class="t" style="left:-28.90px;width:200px;text-align:center;top:178.94px;font-size:10.0px;color:#000;font-weight:bold;transform:scaleX(1.008);">Mã số sản phẩm</div>
<div class="t" style="left:73.30px;width:200px;text-align:center;top:178.94px;font-size:10.0px;color:#000;font-weight:bold;transform:scaleX(0.947);">Tên SP</div>
<div class="t" style="left:169.75px;width:200px;text-align:center;top:178.94px;font-size:10.0px;color:#000;font-weight:bold;transform:scaleX(1.001);">Số lượng (Kg)</div>
<div class="t" style="left:261.50px;width:200px;text-align:center;top:178.94px;font-size:10.0px;color:#000;font-weight:bold;transform:scaleX(1.032);">Đơn giá</div>
<div class="t" style="left:-29.50px;width:200px;text-align:center;top:194.94px;font-size:10.0px;color:#000;font-weight:normal;transform:scaleX(0.913);-webkit-text-stroke:0.2px #000;">T01</div>
<div class="t" style="left:73.00px;width:200px;text-align:center;top:194.94px;font-size:10.0px;color:#000;font-weight:normal;transform:scaleX(0.980);-webkit-text-stroke:0.2px #000;">Táo</div>
<div class="t" style="left:169.50px;width:200px;text-align:center;top:194.94px;font-size:10.0px;color:#000;font-weight:normal;transform:scaleX(0.964);-webkit-text-stroke:0.2px #000;">10</div>
<div class="t" style="left:261.50px;width:200px;text-align:center;top:194.94px;font-size:10.0px;color:#000;font-weight:normal;transform:scaleX(0.986);-webkit-text-stroke:0.2px #000;">30000</div>
<div class="t" style="left:-29.50px;width:200px;text-align:center;top:210.94px;font-size:10.0px;color:#000;font-weight:normal;transform:scaleX(0.921);-webkit-text-stroke:0.2px #000;">C02</div>
<div class="t" style="left:73.00px;width:200px;text-align:center;top:210.94px;font-size:10.0px;color:#000;font-weight:normal;transform:scaleX(0.986);-webkit-text-stroke:0.2px #000;">Cam</div>
<div class="t" style="left:169.50px;width:200px;text-align:center;top:210.94px;font-size:10.0px;color:#000;font-weight:normal;transform:scaleX(0.847);-webkit-text-stroke:0.2px #000;">7</div>
<div class="t" style="left:261.50px;width:200px;text-align:center;top:210.94px;font-size:10.0px;color:#000;font-weight:normal;transform:scaleX(0.986);-webkit-text-stroke:0.2px #000;">20000</div>
<div class="t" style="left:-29.50px;width:200px;text-align:center;top:226.94px;font-size:10.0px;color:#000;font-weight:normal;transform:scaleX(0.933);-webkit-text-stroke:0.2px #000;">B03</div>
<div class="t" style="left:73.00px;width:200px;text-align:center;top:226.94px;font-size:10.0px;color:#000;font-weight:normal;transform:scaleX(1.025);-webkit-text-stroke:0.2px #000;">Bưởi</div>
<div class="t" style="left:169.50px;width:200px;text-align:center;top:226.94px;font-size:10.0px;color:#000;font-weight:normal;transform:scaleX(0.883);-webkit-text-stroke:0.2px #000;">9</div>
<div class="t" style="left:261.50px;width:200px;text-align:center;top:226.94px;font-size:10.0px;color:#000;font-weight:normal;transform:scaleX(0.986);-webkit-text-stroke:0.2px #000;">35000</div>
<div class="t" style="left:-29.50px;width:200px;text-align:center;top:242.94px;font-size:10.0px;color:#000;font-weight:normal;transform:scaleX(0.905);-webkit-text-stroke:0.2px #000;">D04</div>
<div class="t" style="left:73.00px;width:200px;text-align:center;top:242.94px;font-size:10.0px;color:#000;font-weight:normal;transform:scaleX(1.024);-webkit-text-stroke:0.2px #000;">Dưa hấu</div>
<div class="t" style="left:169.50px;width:200px;text-align:center;top:242.94px;font-size:10.0px;color:#000;font-weight:normal;transform:scaleX(0.946);-webkit-text-stroke:0.2px #000;">15</div>
<div class="t" style="left:261.50px;width:200px;text-align:center;top:242.94px;font-size:10.0px;color:#000;font-weight:normal;transform:scaleX(0.971);-webkit-text-stroke:0.2px #000;">12000</div>
<div class="t" style="left:-29.50px;width:200px;text-align:center;top:258.94px;font-size:10.0px;color:#000;font-weight:normal;transform:scaleX(0.921);-webkit-text-stroke:0.2px #000;">C02</div>
<div class="t" style="left:73.00px;width:200px;text-align:center;top:258.94px;font-size:10.0px;color:#000;font-weight:normal;transform:scaleX(0.986);-webkit-text-stroke:0.2px #000;">Cam</div>
<div class="t" style="left:169.50px;width:200px;text-align:center;top:258.94px;font-size:10.0px;color:#000;font-weight:normal;transform:scaleX(0.847);-webkit-text-stroke:0.2px #000;">7</div>
<div class="t" style="left:261.50px;width:200px;text-align:center;top:258.94px;font-size:10.0px;color:#000;font-weight:normal;transform:scaleX(0.986);-webkit-text-stroke:0.2px #000;">20000</div>
<div class="t" style="left:-29.50px;width:200px;text-align:center;top:274.94px;font-size:10.0px;color:#000;font-weight:normal;transform:scaleX(0.933);-webkit-text-stroke:0.2px #000;">B03</div>
<div class="t" style="left:73.00px;width:200px;text-align:center;top:274.94px;font-size:10.0px;color:#000;font-weight:normal;transform:scaleX(1.025);-webkit-text-stroke:0.2px #000;">Bưởi</div>
<div class="t" style="left:169.50px;width:200px;text-align:center;top:274.94px;font-size:10.0px;color:#000;font-weight:normal;transform:scaleX(0.883);-webkit-text-stroke:0.2px #000;">9</div>
<div class="t" style="left:261.50px;width:200px;text-align:center;top:274.94px;font-size:10.0px;color:#000;font-weight:normal;transform:scaleX(0.986);-webkit-text-stroke:0.2px #000;">35000</div>
<div class="a" style="left:21px;top:173px;width:390px;height:115px;border:2px solid #2c7850"></div>
<div class="a" style="left:407px;top:283px;width:7px;height:7px;background:#fff;"></div>
<div class="a" style="left:408px;top:284px;width:5px;height:5px;background:#217346;"></div>
<div class="a" style="left:0px;top:0px;width:1px;height:450px;background:#8fbea4;"></div>
<div class="a" style="left:1px;top:0px;width:1px;height:450px;background:#6e9f83;"></div>
<div class="a" style="left:2px;top:46px;width:1px;height:404px;background:#dfe9e3;"></div>
</body></html>
